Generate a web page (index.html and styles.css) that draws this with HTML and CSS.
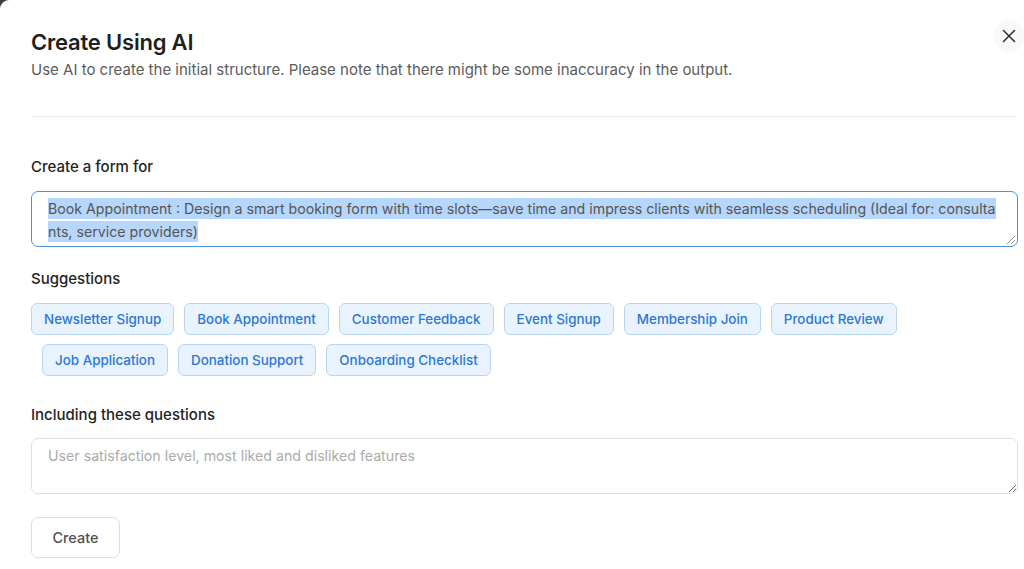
FILE: index.html
```html
<!DOCTYPE html>
<html lang="en">
<head>
    <meta charset="UTF-8">
    <meta name="viewport" content="width=device-width, initial-scale=1.0">
    <title>Create Using AI</title>
    <link rel="stylesheet" href="styles.css">
</head>
<body>
    <div class="modal">
        <div class="modal-header">
            <div>
                <h1 class="title">Create Using AI</h1>
                <p class="subtitle">Use AI to create the initial structure. Please note that there might be some inaccuracy in the output.</p>
            </div>
            <button class="close-btn" aria-label="Close">
                <svg width="14" height="14" viewBox="0 0 14 14" fill="none" stroke="#2b2b2b" stroke-width="1.5" stroke-linecap="round">
                    <path d="M1.5 1.5 L12.5 12.5 M12.5 1.5 L1.5 12.5"/>
                </svg>
            </button>
        </div>

        <div class="divider"></div>

        <label class="field-label label-form">Create a form for</label>
        <div class="fake-textarea focused">
            <span class="selected">Book Appointment : Design a smart booking form with time slots—save time and impress clients with seamless scheduling (Ideal for: consultants, service providers)</span>
        </div>

        <div class="field-label label-suggest">Suggestions</div>
        <div class="chips">
            <div class="chip-row">
                <button class="chip">Newsletter Signup</button>
                <button class="chip">Book Appointment</button>
                <button class="chip">Customer Feedback</button>
                <button class="chip">Event Signup</button>
                <button class="chip">Membership Join</button>
                <button class="chip">Product Review</button>
            </div>
            <div class="chip-row second">
                <button class="chip">Job Application</button>
                <button class="chip">Donation Support</button>
                <button class="chip">Onboarding Checklist</button>
            </div>
        </div>

        <label class="field-label label-questions" for="questions">Including these questions</label>
        <textarea id="questions" class="questions" placeholder="User satisfaction level, most liked and disliked features"></textarea>

        <button class="create-btn">Create</button>
    </div>
</body>
</html>
```

FILE: styles.css
```css
* {
    box-sizing: border-box;
}

body {
    margin: 0;
    padding: 0;
    background: #3c3c3c;
    font-family: 'Inter', 'Liberation Sans', sans-serif;
    overflow: hidden;
}

.modal {
    background: #fff;
    min-height: 100vh;
    border-top-left-radius: 9px;
    padding: 28px 6px 0 31px;
}

.modal-header {
    display: flex;
    justify-content: space-between;
    align-items: flex-start;
}

.title {
    margin: 0;
    font-size: 22px;
    line-height: 28px;
    font-weight: 600;
    color: #1f1f1f;
    letter-spacing: -0.2px;
}

.subtitle {
    margin: 3px 0 0;
    font-size: 15px;
    line-height: 22px;
    color: #5c5c5c;
}

.close-btn {
    width: 32px;
    height: 32px;
    margin: -8px -7px 0 0;
    border: none;
    border-radius: 50%;
    background: #f9f9f9;
    display: flex;
    align-items: center;
    justify-content: center;
    padding: 0;
    cursor: pointer;
}

.divider {
    height: 1px;
    background: #ececec;
    margin: 35px 1px 0 0;
}

.field-label {
    display: block;
    font-size: 15px;
    line-height: 22px;
    font-weight: 500;
    color: #242424;
}

.label-form {
    margin-top: 39px;
    margin-bottom: 13px;
}

.fake-textarea {
    position: relative;
    height: 56px;
    border: 1px solid #4f92dc;
    border-radius: 7px;
    padding: 6px 16px 2px;
    font-size: 14.2px;
    line-height: 22.5px;
    color: #555;
    word-break: break-all;
}

.fake-textarea::after {
    content: '';
    position: absolute;
    right: 2px;
    bottom: 2px;
    width: 8px;
    height: 8px;
    background: linear-gradient(135deg, transparent 45%, #999 45%, #999 55%, transparent 55%, transparent 70%, #999 70%, #999 80%, transparent 80%);
}

.selected {
    background: #b7d6fb;
    padding: 2px 0;
}

.label-suggest {
    margin-top: 21px;
    margin-bottom: 13px;
}

.chip-row {
    display: flex;
    gap: 10px;
}

.chip-row.second {
    margin-top: 9px;
    padding-left: 11px;
}

.chip {
    height: 32px;
    padding: 0 12px;
    border: 1px solid #b9d5f2;
    border-radius: 6px;
    background: #e9f3fe;
    color: #2b78d4;
    font-family: inherit;
    font-size: 13.4px;
    font-weight: 500;
    cursor: pointer;
}

.label-questions {
    margin-top: 28px;
    margin-bottom: 12px;
}

.questions {
    display: block;
    width: 100%;
    height: 56px;
    border: 1px solid #e0e0e0;
    border-radius: 7px;
    padding: 6px 16px 2px;
    font-family: inherit;
    font-size: 14.2px;
    line-height: 22.5px;
    color: #555;
    resize: vertical;
    outline: none;
}

.questions::placeholder {
    color: #ababab;
}

.create-btn {
    margin-top: 23px;
    width: 89px;
    height: 41px;
    border: 1px solid #dedede;
    border-radius: 7px;
    background: #fff;
    color: #505050;
    font-family: inherit;
    font-size: 14.5px;
    font-weight: 500;
    cursor: pointer;
}
```
